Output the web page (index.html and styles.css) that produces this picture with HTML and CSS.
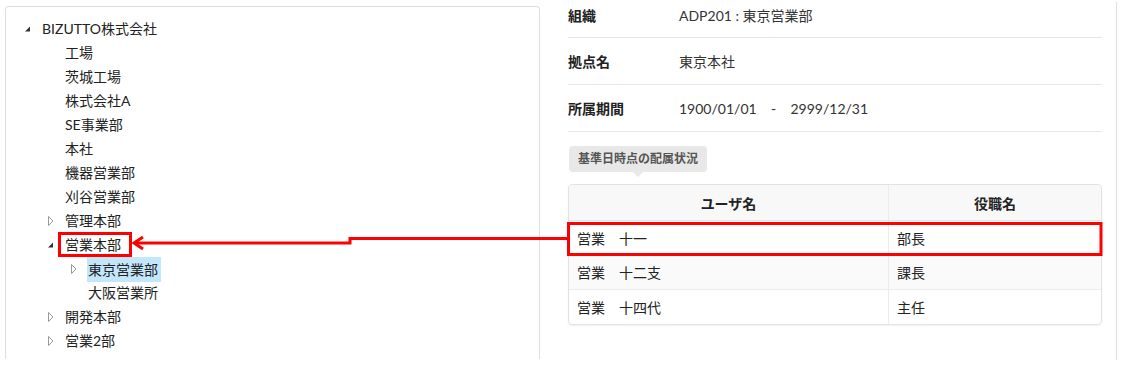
FILE: index.html
```html
<!DOCTYPE html>
<html lang="ja">
<head>
    <meta charset="UTF-8">
    <title>組織ツリー</title>
    <link rel="stylesheet" href="styles.css">
</head>
<body>
    <div class="page">
        <div class="tree-panel">
            <ul class="tree">
                <li>
                    <div class="node"><span class="toggle open"><svg width="17" height="24"><polygon points="1,14.5 6,9.5 6,14.5" fill="#333"/></svg></span><span class="label">BIZUTTO株式会社</span></div>
                    <ul>
                        <li><div class="node"><span class="toggle"></span><span class="label">工場</span></div></li>
                        <li><div class="node"><span class="toggle"></span><span class="label">茨城工場</span></div></li>
                        <li><div class="node"><span class="toggle"></span><span class="label">株式会社A</span></div></li>
                        <li><div class="node"><span class="toggle"></span><span class="label">SE事業部</span></div></li>
                        <li><div class="node"><span class="toggle"></span><span class="label">本社</span></div></li>
                        <li><div class="node"><span class="toggle"></span><span class="label">機器営業部</span></div></li>
                        <li><div class="node"><span class="toggle"></span><span class="label">刈谷営業部</span></div></li>
                        <li><div class="node"><span class="toggle"><svg width="17" height="24"><polygon points="1.5,7.5 6,12 1.5,16.5" fill="none" stroke="#999"/></svg></span><span class="label">管理本部</span></div></li>
                        <li>
                            <div class="node"><span class="toggle open"><svg width="17" height="24"><polygon points="1,14.5 6,9.5 6,14.5" fill="#333"/></svg></span><span class="label">営業本部</span></div>
                            <ul>
                                <li><div class="node"><span class="toggle"><svg width="17" height="24"><polygon points="1.5,7.5 6,12 1.5,16.5" fill="none" stroke="#999"/></svg></span><span class="label selected">東京営業部</span></div></li>
                                <li><div class="node"><span class="toggle"></span><span class="label">大阪営業所</span></div></li>
                            </ul>
                        </li>
                        <li><div class="node"><span class="toggle"><svg width="17" height="24"><polygon points="1.5,7.5 6,12 1.5,16.5" fill="none" stroke="#999"/></svg></span><span class="label">開発本部</span></div></li>
                        <li><div class="node"><span class="toggle"><svg width="17" height="24"><polygon points="1.5,7.5 6,12 1.5,16.5" fill="none" stroke="#999"/></svg></span><span class="label">営業2部</span></div></li>
                    </ul>
                </li>
            </ul>
        </div>

        <div class="detail-panel">
            <div class="fields">
                <div class="field">
                    <div class="field-label">組織</div>
                    <div class="field-value">ADP201 : 東京営業部</div>
                </div>
                <div class="field">
                    <div class="field-label">拠点名</div>
                    <div class="field-value">東京本社</div>
                </div>
                <div class="field">
                    <div class="field-label">所属期間</div>
                    <div class="field-value">1900/01/01&nbsp;&nbsp;&nbsp; - &nbsp;&nbsp;&nbsp;2999/12/31</div>
                </div>
            </div>

            <div class="tag">基準日時点の配属状況</div>

            <div class="table-wrap">
                <table class="members">
                    <thead>
                        <tr><th class="col-user">ユーザ名</th><th>役職名</th></tr>
                    </thead>
                    <tbody>
                        <tr><td>営業　十一</td><td>部長</td></tr>
                        <tr><td>営業　十二支</td><td>課長</td></tr>
                        <tr><td>営業　十四代</td><td>主任</td></tr>
                    </tbody>
                </table>
            </div>
        </div>
    </div>

    <!-- 説明用の注記（赤枠と矢印） -->
    <svg class="annotation" width="1124" height="374">
        <rect x="59.5" y="233.5" width="71" height="22" fill="none" stroke="#f00" stroke-width="3"/>
        <polyline points="134,243 350,243 350,238.5 568,238.5" fill="none" stroke="#f00" stroke-width="3"/>
        <polyline points="143,237 134,243 143,249" fill="none" stroke="#f00" stroke-width="3"/>
        <rect x="568.5" y="223.5" width="532.5" height="31" fill="none" stroke="#f00" stroke-width="3"/>
    </svg>
</body>
</html>
```

FILE: styles.css
```css
body {
    margin: 0;
    font-family: Lato, "Noto Sans CJK JP", sans-serif;
    font-size: 14px;
    color: #222;
    background: #fff;
}
.page {
    display: flex;
    align-items: flex-start;
    width: 1124px;
    height: 374px;
    overflow: hidden;
}
.tree-panel {
    box-sizing: border-box;
    width: 535px;
    height: 353px;
    margin: 6px 0 0 5px;
    padding: 10px 0 0 18px;
    border: 1px solid #dedede;
    border-bottom: none;
    border-radius: 4px 4px 0 0;
}
.tree, .tree ul {
    list-style: none;
    margin: 0;
    padding: 0;
}
.tree ul {
    padding-left: 23px;
}
.node {
    display: flex;
    align-items: center;
    height: 24px;
}
.toggle {
    width: 17px;
    height: 24px;
    flex: none;
}
.toggle svg {
    display: block;
}
.label {
    padding: 0 3px 0 1px;
    line-height: 24px;
    white-space: nowrap;
}
.label.selected {
    background: #c2e7fb;
    line-height: 25px;
}
.detail-panel {
    box-sizing: border-box;
    width: 577px;
    height: 358px;
    margin-top: 2px;
    padding: 0 14px 0 28px;
    border-right: 1px solid #dedede;
}
.fields {
    margin-top: -10px;
}
.field {
    display: flex;
    height: 46px;
    align-items: center;
    padding-top: 2px;
    box-sizing: border-box;
    border-bottom: 1px solid #e6e6e6;
    line-height: 20px;
}
.field + .field {
    height: 47px;
}
.field-label {
    width: 111px;
    font-weight: bold;
}
.field-value {
    color: #333;
}
.tag {
    position: relative;
    display: inline-block;
    margin: 14px 0 0 1px;
    padding: 0 9px;
    height: 26px;
    line-height: 26px;
    font-size: 12px;
    font-weight: bold;
    color: #555;
    background: #e8e8e8;
    border-radius: 4px;
}
.tag::after {
    content: "";
    position: absolute;
    left: 64px;
    bottom: -5px;
    border-left: 5px solid transparent;
    border-right: 5px solid transparent;
    border-top: 5px solid #e8e8e8;
}
.table-wrap {
    margin-top: 12px;
    border: 1px solid #e2e2e2;
    border-radius: 4px;
    overflow: hidden;
    box-shadow: 0 1px 2px rgba(0,0,0,0.06);
}
.members {
    width: 100%;
    border-collapse: collapse;
    table-layout: fixed;
}
.members th {
    height: 35px;
    padding: 0;
    background: #f8f8f8;
    font-weight: bold;
    text-align: center;
    border-bottom: 1px solid #e6e6e6;
}
.members th.col-user {
    width: 319px;
}
.members th:first-child, .members td:first-child {
    border-right: 1px solid #ececec;
}
.members td {
    height: 34px;
    padding: 0 8px;
    border-top: 1px solid #ececec;
    color: #222;
}
.members tbody tr:first-child td {
    height: 33px;
    border-top: none;
}
.members tbody tr:nth-child(2) td {
    background: #fafafa;
}
.annotation {
    position: absolute;
    left: 0;
    top: 0;
    pointer-events: none;
}
```
